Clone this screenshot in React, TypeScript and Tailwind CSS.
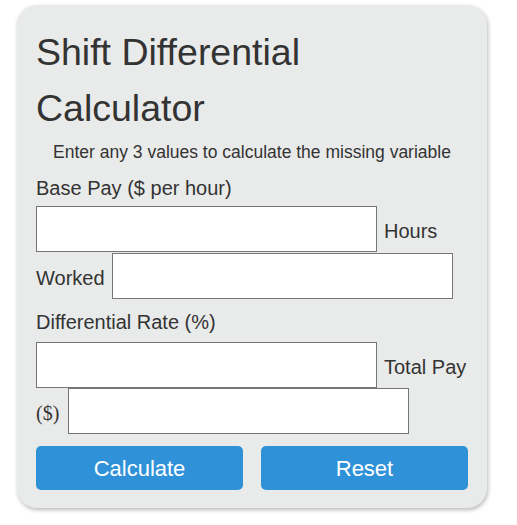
import { useState } from 'react';

const sans = { fontFamily: '"Liberation Sans", Arial, sans-serif' };

function Field({ value, onChange }: { value: string; onChange: (v: string) => void }) {
  return (
    <input
      type="text"
      value={value}
      onChange={(e) => onChange(e.target.value)}
      className="h-[46px] w-[341px] shrink-0 border border-[#767676] bg-white px-2 text-[16px] outline-none"
    />
  );
}

export default function App() {
  const [base, setBase] = useState('');
  const [hours, setHours] = useState('');
  const [rate, setRate] = useState('');
  const [total, setTotal] = useState('');

  const calculate = () => {
    const b = parseFloat(base);
    const h = parseFloat(hours);
    const r = parseFloat(rate);
    const t = parseFloat(total);
    // total = base * hours * (1 + rate / 100); solve for whichever one is empty
    if (!total && !isNaN(b) && !isNaN(h) && !isNaN(r)) setTotal((b * h * (1 + r / 100)).toFixed(2));
    else if (!base && !isNaN(h) && !isNaN(r) && !isNaN(t)) setBase((t / (h * (1 + r / 100))).toFixed(2));
    else if (!hours && !isNaN(b) && !isNaN(r) && !isNaN(t)) setHours((t / (b * (1 + r / 100))).toFixed(2));
    else if (!rate && !isNaN(b) && !isNaN(h) && !isNaN(t)) setRate(((t / (b * h) - 1) * 100).toFixed(2));
  };

  const reset = () => {
    setBase('');
    setHours('');
    setRate('');
    setTotal('');
  };

  return (
    <div className="min-h-screen bg-white pt-[5px] pl-[17px] text-[#333]" style={sans}>
      <div className="w-[470px] rounded-[20px] bg-[#e9ebea] px-[19px] pt-[19px] pb-[18px] shadow-[1px_2px_4px_rgba(0,0,0,0.28)]">
        <h1 className="text-[37.5px] leading-[56px] font-normal">Shift Differential Calculator</h1>
        <p className="mt-[6px] text-center text-[17.5px] leading-[20px]">
          Enter any 3 values to calculate the missing variable
        </p>

        <label className="mt-[15px] block text-[20px] leading-[23px]">Base Pay ($ per hour)</label>
        <div className="mt-[6px] flex items-center gap-[7px]">
          <Field value={base} onChange={setBase} />
          <span className="pt-1 text-[20px] leading-[23px]">Hours</span>
        </div>
        <div className="mt-px flex items-center gap-[7px]">
          <span className="pt-1 text-[20px] leading-[23px]">Worked</span>
          <Field value={hours} onChange={setHours} />
        </div>

        <label className="mt-[12px] block text-[20px] leading-[23px]">Differential Rate (%)</label>
        <div className="mt-[8px] flex items-center gap-[7px]">
          <Field value={rate} onChange={setRate} />
          <span className="pt-1 text-[20px] leading-[23px]">Total Pay</span>
        </div>
        <div className="flex items-center gap-[9px]">
          <span className="pt-1 text-[20px] leading-[23px]" style={{ fontFamily: '"Liberation Serif", serif' }}>
            ($)
          </span>
          <Field value={total} onChange={setTotal} />
        </div>

        <div className="mt-[12px] grid grid-cols-2 gap-[18px]">
          <button
            onClick={calculate}
            className="h-[44px] rounded-[5px] bg-[#2f92d9] text-[22px] text-white"
          >
            Calculate
          </button>
          <button onClick={reset} className="h-[44px] rounded-[5px] bg-[#2f92d9] text-[22px] text-white">
            Reset
          </button>
        </div>
      </div>
    </div>
  );
}
